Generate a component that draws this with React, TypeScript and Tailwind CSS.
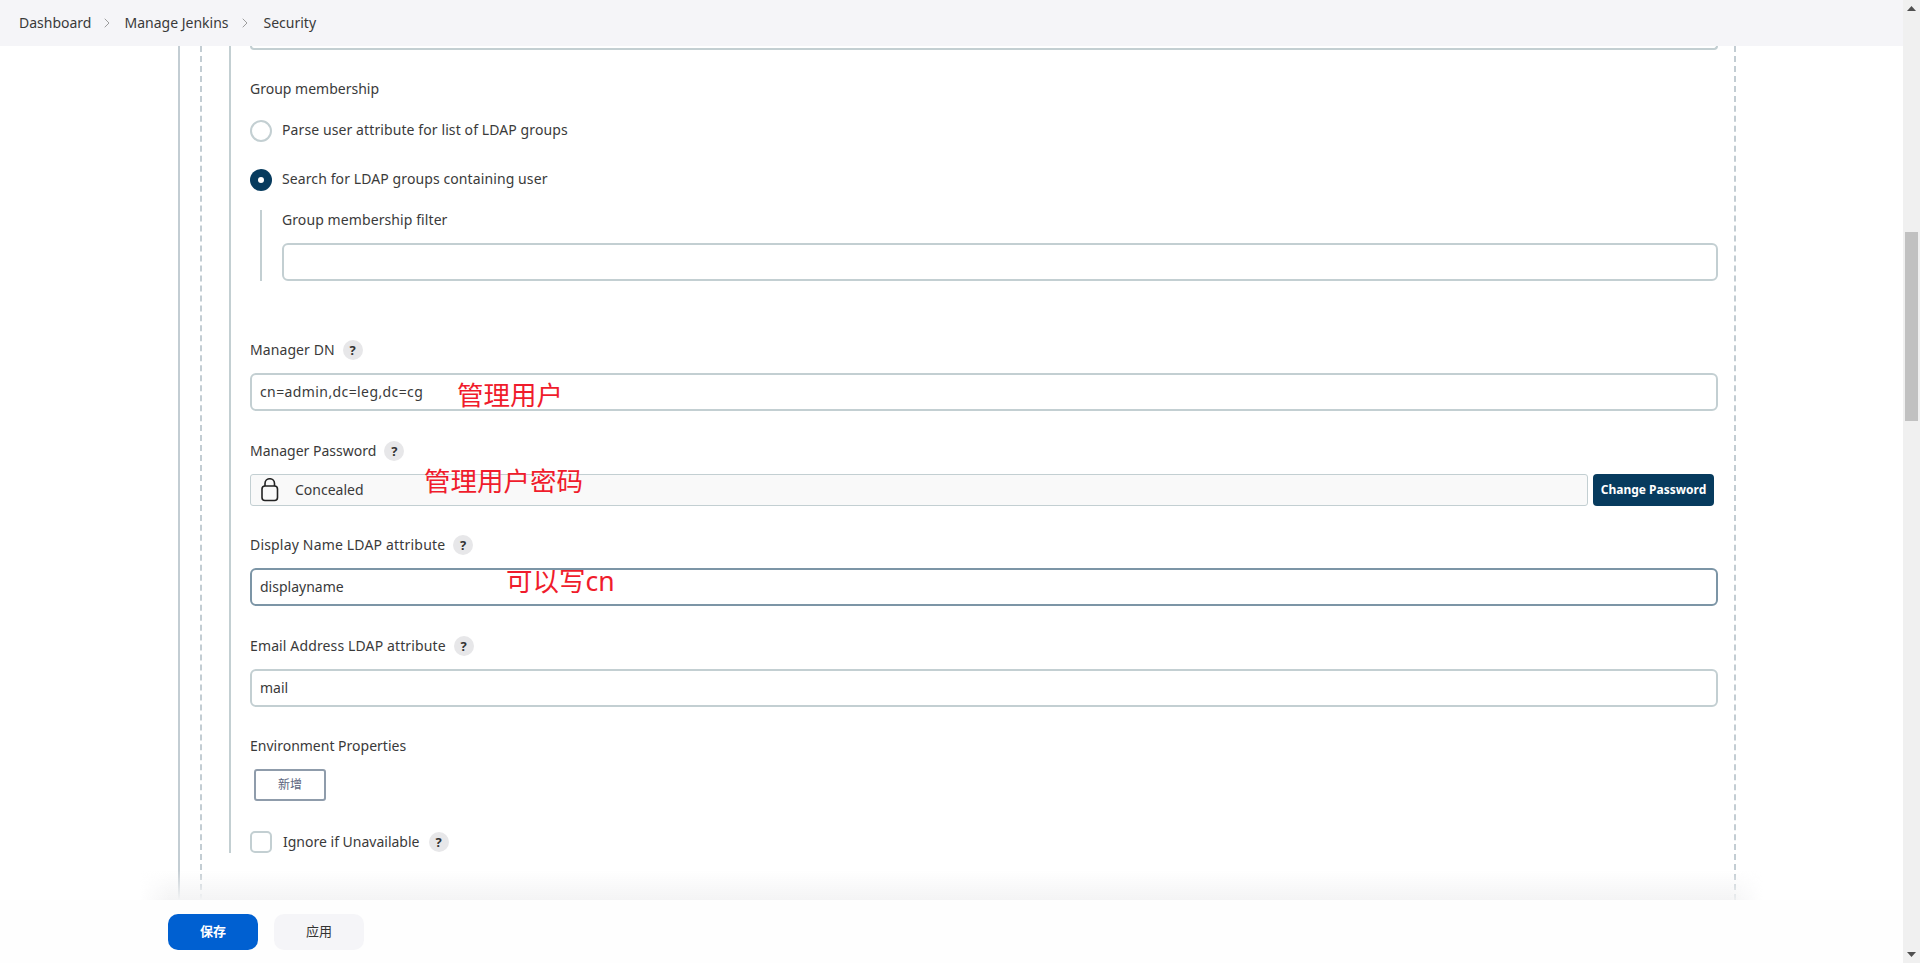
import { ChevronRight } from 'lucide-react'

const font = '[font-family:"Noto_Sans","Noto_Sans_CJK_SC",sans-serif]'

function Help() {
    return (
        <span className="w-5 h-5 rounded-full bg-[#e7e7e9] text-[#333] text-[13px] font-bold flex items-center justify-center shrink-0">?</span>
    )
}

function Label({ text, help, tracking = 'tracking-[0.09px]' }: { text: string, help?: boolean, tracking?: string }) {
    return (
        <div className={`h-5 flex items-center text-sm leading-5 text-[#3a3a3a] ${tracking}`}>
            <span>{text}</span>
            {help && <span className="ml-2"><Help /></span>}
        </div>
    )
}

function TextBox({ value, focused, wide }: { value?: string, focused?: boolean, wide?: boolean }) {
    return (
        <div className={`h-[38px] mt-[13px] flex items-center px-2 border-2 rounded-[6px] bg-white text-sm text-[#3a3a3a] ${wide ? 'tracking-[0.4px]' : ''} ${focused ? 'border-[#7c95a6]' : 'border-[#c3cfd2]'}`}>
            <span className="-mt-[1px]">{value}</span>
        </div>
    )
}

function Radio({ checked, label }: { checked?: boolean, label: string }) {
    return (
        <div className="flex items-center gap-[10px] h-[22px] text-sm tracking-[0.1px] text-[#3a3a3a]">
            {checked ? (
                <span className="w-[22px] h-[22px] rounded-full bg-[#073b5e] flex items-center justify-center">
                    <span className="w-[6px] h-[6px] rounded-full bg-white" />
                </span>
            ) : (
                <span className="w-[22px] h-[22px] rounded-full border-2 border-[#c3cfd2] bg-white" />
            )}
            <span className="-mt-[2px]">{label}</span>
        </div>
    )
}

function Note({ text, className }: { text: string, className: string }) {
    return <span className={`absolute text-[26.5px] leading-none text-[#f01c2c] whitespace-nowrap ${className}`}>{text}</span>
}

export default function App() {
    return (
        <div className={`h-screen w-full flex overflow-hidden bg-white ${font}`}>
            <div className="flex-1 min-w-0 flex flex-col relative">
                {/* Breadcrumbs */}
                <header className="h-[46px] shrink-0 bg-[#f5f5f8] flex items-center pl-[19px] text-sm text-[#3a3a3a] z-10">
                    <span>Dashboard</span>
                    <ChevronRight size={16} strokeWidth={1.25} className="text-[#8a8a8a] ml-[8px] mr-[9px]" />
                    <span>Manage Jenkins</span>
                    <ChevronRight size={16} strokeWidth={1.25} className="text-[#8a8a8a] ml-[8px] mr-[11px]" />
                    <span>Security</span>
                </header>

                <div className="flex-1 min-h-0 overflow-hidden pl-[178px]">
                    <div className="h-full border-l-2 border-[#c3cdd3] pl-[20px]">
                        <div className="h-full w-[1536px] border-x-2 border-dashed border-[#c3cdd3] pl-[27px]">
                            <div className="relative border-l-2 border-[#c3cfd2] pl-[19px] pr-[16px]">
                                {/* tail of the field above, cut off by the header */}
                                <div className="h-[4px] border-x-2 border-b-2 border-[#c3cfd2] rounded-b-[6px]" />

                                <div className="mt-[29px]"><Label text="Group membership" tracking="tracking-normal" /></div>
                                <div className="mt-[21px]"><Radio label="Parse user attribute for list of LDAP groups" /></div>
                                <div className="mt-[27px]"><Radio checked label="Search for LDAP groups containing user" /></div>
                                <div className="mt-[19px] ml-[10px] border-l-2 border-[#c3cfd2] pl-[20px]">
                                    <Label text="Group membership filter" />
                                    <TextBox />
                                </div>

                                <div className="mt-[59px]"><Label text="Manager DN" help /></div>
                                <TextBox value="cn=admin,dc=leg,dc=cg" wide />

                                <div className="mt-[30px]"><Label text="Manager Password" help tracking="tracking-normal" /></div>
                                <div className="mt-[13px] flex items-center gap-[5px] pr-[4px]">
                                    <div className="flex-1 h-8 flex items-center border border-[#c3cfd2] rounded-[3px] bg-[#f9f9f9] text-sm text-[#3a3a3a] pl-[9px]">
                                        <svg width="20" height="24" viewBox="0 0 20 24" fill="none" stroke="#222" strokeWidth="1.6">
                                            <rect x="2" y="8" width="15.5" height="14.5" rx="3" />
                                            <path d="M5 8V5.5a4.75 4.75 0 0 1 9.5 0V8" />
                                        </svg>
                                        <span className="ml-[15px] -mt-[1px]">Concealed</span>
                                    </div>
                                    <button className="w-[121px] h-8 rounded-[4px] bg-[#073b5e] text-white text-xs font-bold">Change Password</button>
                                </div>

                                <div className="mt-[29px]"><Label text="Display Name LDAP attribute" help tracking="tracking-[0.18px]" /></div>
                                <TextBox value="displayname" focused />

                                <div className="mt-[30px]"><Label text="Email Address LDAP attribute" help tracking="tracking-[0.13px]" /></div>
                                <TextBox value="mail" />

                                <div className="mt-[29px]"><Label text="Environment Properties" tracking="tracking-normal" /></div>
                                <button className="block mt-[13px] ml-[4px] w-[72px] h-8 border-2 border-[#8f9cab] rounded-[3px] bg-white text-xs text-[#5c6680]">新增</button>

                                <div className="mt-[30px] flex items-center h-[22px] text-sm text-[#3a3a3a]">
                                    <span className="w-[22px] h-[22px] rounded-[5px] border-2 border-[#c3cfd2] bg-white" />
                                    <span className="ml-[11px] -mt-[1px]">Ignore if Unavailable</span>
                                    <span className="ml-[9px]"><Help /></span>
                                </div>

                                {/* red notes painted on the screenshot */}
                                <Note text="管理用户" className="left-[226px] top-[336px]" />
                                <Note text="管理用户密码" className="left-[193px] top-[422px]" />
                                <Note text="可以写cn" className="left-[275px] top-[522px]" />
                            </div>
                        </div>
                    </div>
                </div>

                {/* Bottom bar */}
                <div className="absolute left-[140px] w-[1623px] bottom-[63px] h-[30px] bg-gradient-to-t from-[#f4f4f5] to-transparent [mask-image:linear-gradient(to_right,transparent,black_30px,black_1590px,transparent)]" />
                <footer className="h-[63px] shrink-0 bg-[#fefefe] pt-[14px] pl-[168px] flex items-start gap-4 z-10">
                    <button className="w-[90px] h-9 rounded-[10px] bg-[#0060d1] text-white text-[13px] font-bold">保存</button>
                    <button className="w-[90px] h-9 rounded-[10px] bg-[#f5f5f8] text-[#333] text-[13px]">应用</button>
                </footer>
            </div>

            {/* Scrollbar */}
            <div className="w-[17px] shrink-0 bg-[#f0f0f0] flex flex-col items-center">
                <svg width="9" height="6" viewBox="0 0 9 6" className="mt-[6px] shrink-0"><path d="M4.5 0 9 5H0z" fill="#505050" /></svg>
                <div className="mt-[220px] w-[13px] h-[189px] bg-[#c1c1c1]" />
                <div className="flex-1" />
                <svg width="9" height="6" viewBox="0 0 9 6" className="mb-[6px] shrink-0"><path d="M4.5 6 9 1H0z" fill="#505050" /></svg>
            </div>
        </div>
    )
}
